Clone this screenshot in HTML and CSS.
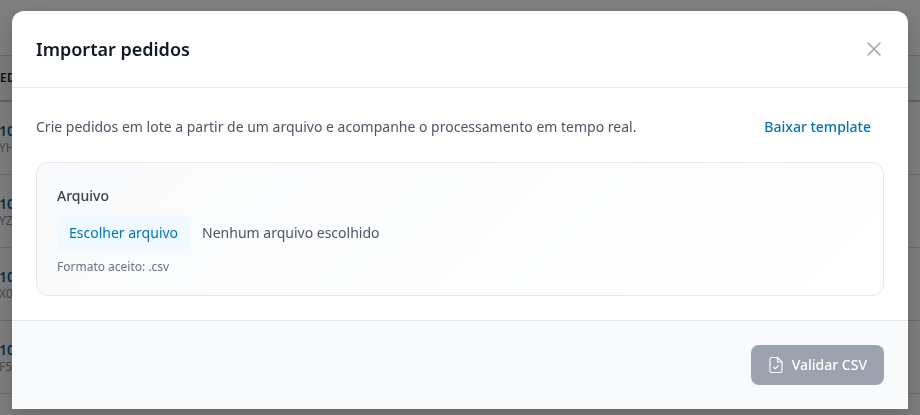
FILE: index.html
```html
<!DOCTYPE html>
<html lang="pt-BR">
<head>
    <meta charset="UTF-8">
    <meta name="viewport" content="width=device-width, initial-scale=1.0">
    <title>Importar pedidos</title>
    <link rel="stylesheet" href="styles.css">
</head>
<body>
    <div class="page">
        <div class="table-head"><span>PEDIDO</span></div>
        <div class="table-row"><strong>1024</strong><small>YH12</small></div>
        <div class="table-row"><strong>1025</strong><small>YZ34</small></div>
        <div class="table-row"><strong>1026</strong><small>X021</small></div>
        <div class="table-row"><strong>1027</strong><small>F5A8</small></div>
    </div>

    <div class="overlay"></div>

    <div class="modal">
        <div class="modal-header">
            <h2>Importar pedidos</h2>
            <button class="close-btn" aria-label="Fechar">
                <svg width="24" height="24" viewBox="0 0 24 24" fill="none" stroke="currentColor" stroke-width="1.5" stroke-linecap="round" stroke-linejoin="round"><path d="M6 18 18 6M6 6l12 12"/></svg>
            </button>
        </div>

        <div class="modal-body">
            <div class="intro">
                <p>Crie pedidos em lote a partir de um arquivo e acompanhe o processamento em tempo real.</p>
                <a href="#" class="link-btn">Baixar template</a>
            </div>

            <div class="upload-card">
                <div class="upload-label">Arquivo</div>
                <div class="file-row">
                    <span class="file-btn">Escolher arquivo</span>
                    <span class="file-name">Nenhum arquivo escolhido</span>
                </div>
                <div class="upload-hint">Formato aceito: .csv</div>
            </div>
        </div>

        <div class="modal-footer">
            <button class="submit-btn" disabled>
                <svg width="18" height="18" viewBox="0 0 24 24" fill="none" stroke="currentColor" stroke-width="1.5" stroke-linecap="round" stroke-linejoin="round"><path d="M14 2H6a2 2 0 0 0-2 2v16a2 2 0 0 0 2 2h12a2 2 0 0 0 2-2V8z"/><path d="M14 2v6h6"/><path d="m9 15 2 2 4-4"/></svg>
                Validar CSV
            </button>
        </div>
    </div>
</body>
</html>
```

FILE: styles.css
```css
* { margin: 0; padding: 0; box-sizing: border-box; }

html, body {
    height: 100%;
    overflow: hidden;
}

body {
    font-family: "Noto Sans", sans-serif;
    background: #fff;
    color: #111827;
}

.page {
    padding-top: 55px;
}

.table-head {
    height: 47px;
    padding: 13px 0 0;
    background: #f9fafb;
    border-top: 1px solid #d1d5db;
    border-bottom: 2px solid #c4c8ce;
    font-size: 12px;
    font-weight: 600;
    letter-spacing: 0.5px;
    text-indent: -8px;
    white-space: nowrap;
}

.table-row {
    height: 73px;
    padding-top: 19px;
    border-bottom: 1px solid #d8dbe0;
    text-indent: -1px;
}

.table-row strong {
    display: block;
    font-size: 14px;
    font-weight: 600;
    line-height: 19px;
    color: #0369a1;
}

.table-row small {
    display: block;
    font-size: 12px;
    line-height: 16px;
    color: #8b93a0;
}

.overlay {
    position: fixed;
    inset: 0;
    background: rgba(0, 0, 0, 0.5);
}

.modal {
    position: fixed;
    top: 11px;
    left: 12px;
    width: 896px;
    height: 398px;
    display: flex;
    flex-direction: column;
    background: #fff;
    border-radius: 12px 12px 0 0;
    box-shadow: 0 10px 25px rgba(0, 0, 0, 0.2);
    overflow: hidden;
}

.modal-header {
    height: 77px;
    flex-shrink: 0;
    display: flex;
    align-items: center;
    justify-content: space-between;
    padding: 0 24px;
    border-bottom: 1px solid #e5e7eb;
}

.modal-header h2 {
    font-size: 18px;
    font-weight: 600;
    color: #111827;
}

.close-btn {
    display: flex;
    margin-right: -2px;
    background: none;
    border: none;
    color: #9ca3af;
}

.modal-body {
    flex: 1;
    padding: 24px 24px 0;
}

.intro {
    display: flex;
    align-items: center;
    justify-content: space-between;
    height: 30px;
    margin-bottom: 20px;
    font-size: 14px;
    line-height: 20px;
    color: #4b5563;
}

.link-btn {
    padding: 0 13px;
    font-weight: 500;
    color: #0474b0;
    text-decoration: none;
}

.upload-card {
    height: 134px;
    padding: 23px 20px 0;
    border: 1px solid #e5e7eb;
    border-radius: 12px;
    background: linear-gradient(135deg, #f9fafb 0%, #fff 100%);
}

.upload-label {
    font-size: 14px;
    font-weight: 500;
    line-height: 20px;
    color: #374151;
}

.file-row {
    display: flex;
    align-items: center;
    gap: 12px;
    margin-top: 9px;
    font-size: 14px;
    line-height: 20px;
    color: #4b5563;
}

.file-btn {
    height: 36px;
    padding: 0 12px;
    line-height: 35px;
    border-radius: 8px;
    background: #f0f9ff;
    color: #0474b0;
}

.upload-hint {
    margin-top: 8px;
    font-size: 12px;
    line-height: 16px;
    color: #6b7280;
}

.modal-footer {
    height: 89px;
    flex-shrink: 0;
    display: flex;
    justify-content: flex-end;
    padding: 24px;
    background: #f9fafb;
    border-top: 1px solid #e5e7eb;
}

.submit-btn {
    display: flex;
    align-items: center;
    gap: 7px;
    height: 40px;
    padding: 0 17px 1px 16px;
    border: none;
    border-radius: 8px;
    background: #9ca3af;
    color: #fff;
    font-family: inherit;
    font-size: 14px;
    line-height: 20px;
    font-weight: 500;
}
```
